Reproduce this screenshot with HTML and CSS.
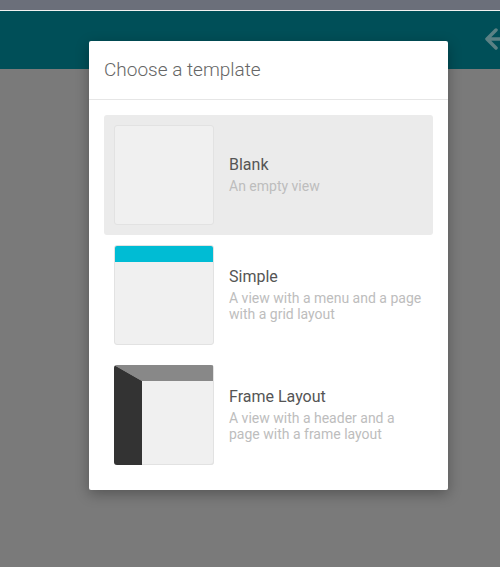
FILE: index.html
```html
<!DOCTYPE html>
<html>
<head>
<meta charset="utf-8">
<link rel="stylesheet" href="styles.css">
</head>
<body>
<div class="topstrip"></div>
<div class="appbar">
  <svg class="back" width="26" height="26" viewBox="0 0 26 26"><path d="M24 13H5M13 4L4 13l9 9" fill="none" stroke="#5b8184" stroke-width="3.5" stroke-linecap="round" stroke-linejoin="round"/></svg>
</div>
<div class="dialog">
  <div class="dlg-head">Choose a template</div>
  <div class="list">
    <div class="card active">
      <div class="thumb"></div>
      <div class="info">
        <div class="name">Blank</div>
        <div class="desc">An empty view</div>
      </div>
    </div>
    <div class="card">
      <div class="thumb simple"><div class="bar"></div></div>
      <div class="info">
        <div class="name">Simple</div>
        <div class="desc">A view with a menu and a page with a grid layout</div>
      </div>
    </div>
    <div class="card">
      <div class="thumb frame">
        <svg width="100" height="100" viewBox="0 0 100 100"><polygon points="0,0 99,0 99,16 28,16" fill="#888"/><polygon points="0,0 28,16 28,100 0,100" fill="#333"/></svg>
      </div>
      <div class="info">
        <div class="name">Frame Layout</div>
        <div class="desc">A view with a header and a page with a frame layout</div>
      </div>
    </div>
  </div>
</div>
</body>
</html>
```
FILE: styles.css
```css
* { box-sizing: border-box; }
html, body { margin: 0; padding: 0; }
body {
  width: 500px;
  height: 567px;
  background: #7a7a7a;
  font-family: Roboto, "Noto Sans", sans-serif;
  position: relative;
  overflow: hidden;
}
.topstrip {
  height: 10px;
  background: #6b6f7a;
  border-bottom: 1px solid #f2f2f2;
  box-sizing: content-box;
}
.appbar {
  height: 58px;
  background: #004f58;
  display: flex;
  justify-content: flex-end;
  align-items: center;
  padding-bottom: 2px;
}
.back { margin-right: -9px; }
.dialog {
  position: absolute;
  left: 89px;
  top: 41px;
  width: 359px;
  height: 449px;
  background: #fff;
  border-radius: 2px;
  box-shadow: 0 4px 14px rgba(0,0,0,0.3);
}
.dlg-head {
  height: 59px;
  padding: 17px 15px 0;
  font-size: 19px;
  font-weight: 300;
  color: #666;
  border-bottom: 1px solid #e6e6e6;
}
.list {
  padding: 15px;
  display: flex;
  flex-direction: column;
}
.card {
  height: 120px;
  display: flex;
  align-items: center;
  padding: 10px 0 10px 10px;
  border-radius: 3px;
}
.card.active { background: #ebebeb; }
.thumb {
  width: 100px;
  height: 100px;
  flex: none;
  background: #f0f0f0;
  border: 1px solid #e2e2e2;
  border-radius: 3px;
  overflow: hidden;
}
.thumb.simple .bar {
  height: 17px;
  margin: -1px -1px 0;
  background: #00bcd4;
}
.thumb.frame {
  border: none;
  background: #f0f0f0;
  box-shadow: inset -1px -1px 0 #e2e2e2;
}
.thumb.frame svg { display: block; }
.info {
  width: 196px;
  margin-left: 15px;
  padding-bottom: 1px;
}
.name {
  font-size: 16px;
  line-height: 20px;
  color: #555;
}
.desc {
  margin-top: 3px;
  font-size: 14px;
  line-height: 16px;
  color: #bdbdbd;
}
```
